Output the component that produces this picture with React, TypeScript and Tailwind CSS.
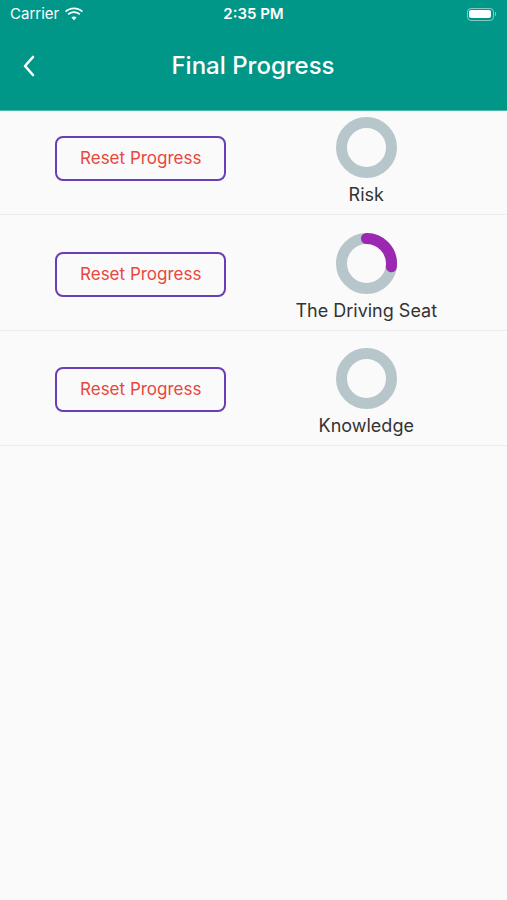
import React from "react";

type Topic = { name: string; value: number };

const topics: Topic[] = [
  { name: "Risk", value: 0 },
  { name: "The Driving Seat", value: 0.27 },
  { name: "Knowledge", value: 0 },
];

function Ring({ value }: { value: number }) {
  const r = 25;
  const c = 2 * Math.PI * r;
  return (
    <svg width="61" height="61" viewBox="0 0 61 61">
      <circle cx="30.5" cy="30.5" r={r} fill="none" stroke="#b7c6cb" strokeWidth="11" />
      {value > 0 && (
        <circle
          cx="30.5"
          cy="30.5"
          r={r}
          fill="none"
          stroke="#9c27b0"
          strokeWidth="11"
          strokeLinecap="round"
          strokeDasharray={`${c * value} ${c}`}
          transform="rotate(-90 30.5 30.5)"
        />
      )}
    </svg>
  );
}

function StatusBar() {
  return (
    <div className="h-[28px] flex items-center justify-between px-[10px] text-white text-[15px]">
      <div className="flex items-center gap-[6px] w-[120px]">
        <span>Carrier</span>
        <svg width="18" height="14" viewBox="0 0 18 14" fill="white">
          <path d="M9 2.2c3 0 5.8 1.1 7.9 3.1l1.1-1.2C15.6 1.8 12.4.5 9 .5S2.4 1.8 0 4.1l1.1 1.2C3.2 3.3 6 2.2 9 2.2z" />
          <path d="M9 5.9c2 0 3.8.7 5.2 2l1.2-1.2C13.7 5.1 11.4 4.2 9 4.2S4.3 5.1 2.6 6.7l1.2 1.2c1.4-1.3 3.2-2 5.2-2z" />
          <path d="M9 9.5c1 0 1.9.4 2.6 1L9 13.3 6.4 10.5c.7-.6 1.6-1 2.6-1z" />
        </svg>
      </div>
      <span className="font-semibold">2:35 PM</span>
      <div className="w-[120px] flex justify-end pr-[1px]">
        <div className="flex items-center">
          <div className="w-[27px] h-[13px] rounded-[4px] border border-white/50 p-[1.5px]">
            <div className="w-full h-full bg-white rounded-[2px]" />
          </div>
          <div className="w-[1.5px] h-[4px] bg-white/50 rounded-r-sm ml-[1px]" />
        </div>
      </div>
    </div>
  );
}

export default function App() {
  return (
    <div
      className="min-h-screen bg-[#fafafa]"
      style={{ fontFamily: "Inter, 'Noto Sans', sans-serif" }}
    >
      <header className="h-[111px] bg-[#009688] border-b border-[#4db6ac]">
        <StatusBar />
        <div className="h-[76px] flex items-center px-[20px]">
          <svg width="18" height="22" viewBox="0 0 18 22" fill="none">
            <path d="M13 2 L5 11 L13 20" stroke="white" strokeWidth="2.6" strokeLinecap="round" strokeLinejoin="round" />
          </svg>
          <h1 className="flex-1 text-center text-white text-[24px] font-medium pr-[19px] -mt-[1px]">
            Final Progress
          </h1>
        </div>
      </header>

      <div>
        {topics.map((t, i) => (
          <div
            key={t.name}
            className={
              i === 0
                ? "h-[104px] pt-[6px] grid grid-cols-2 px-[28px] border-b border-[#ededed]"
                : i === 1
                ? "h-[116px] pt-[18px] grid grid-cols-2 px-[28px] border-b border-[#ededed]"
                : "h-[115px] pt-[17px] grid grid-cols-2 px-[28px] border-b border-[#ededed]"
            }
          >
            <div className="flex justify-center items-start pt-[19px]">
              <button className="w-[171px] h-[45px] rounded-[8px] border-2 border-[#6a3fb5] text-[#e8473d] text-[17px] bg-transparent">
                Reset Progress
              </button>
            </div>
            <div className="flex flex-col items-center">
              <Ring value={t.value} />
              <span className="mt-[5px] leading-[24px] text-[18px] text-[#333333]">
                {t.name}
              </span>
            </div>
          </div>
        ))}
      </div>
    </div>
  );
}
